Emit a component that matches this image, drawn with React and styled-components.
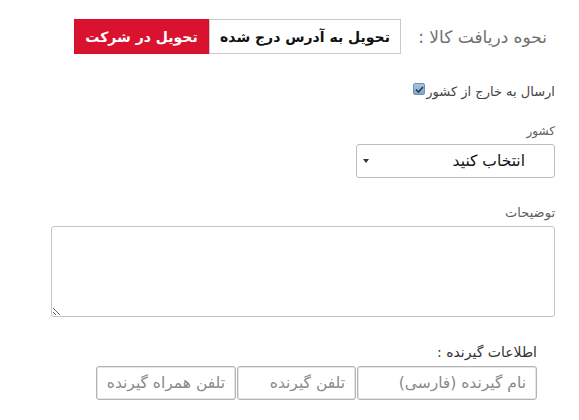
import React from "react";
import styled, { createGlobalStyle } from "styled-components";

const GlobalStyle = createGlobalStyle`
  body {
    margin: 0;
    background: #ffffff;
    font-family: "DejaVu Sans", "Noto Sans", sans-serif;
  }
`;

const Page = styled.div`
  direction: rtl;
  width: 504px;
  margin-right: 24px;
  margin-left: auto;
  padding-top: 19px;
  display: flex;
  flex-direction: column;
`;

const DeliveryRow = styled.div`
  display: flex;
  align-items: center;
  gap: 11px;
  padding-right: 8px;
`;

const Label = styled.span`
  width: 135px;
  font-size: 17px;
  color: #707070;
  white-space: nowrap;
`;

const ButtonGroup = styled.div`
  display: flex;
`;

const Choice = styled.button`
  width: ${({ $w }) => $w}px;
  height: 35px;
  padding: 0;
  font-family: inherit;
  font-size: 14px;
  font-weight: bold;
  border: 1px solid ${({ $active }) => ($active ? "#d6102c" : "#c9c9c9")};
  background: ${({ $active }) => ($active ? "#d9122f" : "#ffffff")};
  color: ${({ $active }) => ($active ? "#ffffff" : "#111")};
  cursor: pointer;
`;

const CheckRow = styled.label`
  display: flex;
  align-items: center;
  margin-top: 30px;
  font-size: 13px;
  color: #444;
  height: 14px;
`;

const Check = styled.span`
  width: 12px;
  height: 12px;
  margin-top: -4px;
  margin-right: 1px;
  border-radius: 2px;
  background: linear-gradient(#a9c6df, #7fa6c8);
  border: 1px solid #6f92b3;
  display: flex;
  align-items: center;
  justify-content: center;
  box-sizing: border-box;
`;

const Field = styled.div`
  display: flex;
  flex-direction: column;
  align-items: flex-start;
  margin-top: ${({ $top }) => $top}px;
`;

const FieldLabel = styled.div`
  font-size: ${({ $size }) => $size || 13}px;
  color: ${({ $dark }) => ($dark ? "#333" : "#606060")};
  margin-bottom: 6px;
  padding-right: ${({ $indent }) => $indent || 0}px;
`;

const Select = styled.div`
  width: 199px;
  height: 34px;
  box-sizing: border-box;
  border: 1px solid #bdbdbd;
  border-radius: 3px;
  display: flex;
  align-items: center;
  justify-content: space-between;
  padding: 0 29px 0 6px;
  font-size: 15.5px;
  color: #111;
`;

const Caret = styled.span`
  width: 0;
  height: 0;
  border-left: 3px solid transparent;
  border-right: 3px solid transparent;
  border-top: 4px solid #333;
`;

const TextArea = styled.textarea`
  width: 504px;
  height: 91px;
  box-sizing: border-box;
  border: 1px solid #c4c4c4;
  border-radius: 3px;
  resize: vertical;
  font-family: inherit;
  direction: rtl;
`;

const InputRow = styled.div`
  display: flex;
  gap: 1px;
  padding-right: 18px;
`;

const Input = styled.input`
  width: ${({ $w }) => $w}px;
  height: 34px;
  box-sizing: border-box;
  border: 1px solid #b3b3b3;
  border-radius: 3px;
  box-shadow: inset 0 0 0 1px #e6e6e6;
  padding: 0 10px;
  font-family: inherit;
  font-size: 15.5px;
  direction: rtl;
  &::placeholder {
    color: #8a8a8a;
  }
`;

export default function App() {
  return (
    <>
      <GlobalStyle />
      <Page>
        <DeliveryRow>
          <Label>نحوه دریافت کالا :</Label>
          <ButtonGroup>
            <Choice $w={192}>تحویل به آدرس درج شده</Choice>
            <Choice $w={135} $active>
              تحویل در شرکت
            </Choice>
          </ButtonGroup>
        </DeliveryRow>

        <CheckRow>
          ارسال به خارج از کشور
          <Check>
            <svg width="9" height="7" viewBox="0 0 9 7">
              <path d="M1 3.5 L3.5 6 L8 1" stroke="#1d3d5c" strokeWidth="1.6" fill="none" />
            </svg>
          </Check>
        </CheckRow>

        <Field $top={26}>
          <FieldLabel $size={12}>کشور</FieldLabel>
          <Select>
            <span>انتخاب کنید</span>
            <Caret />
          </Select>
        </Field>

        <Field $top={27}>
          <FieldLabel>توضیحات</FieldLabel>
          <TextArea />
        </Field>

        <Field $top={27}>
          <FieldLabel $indent={18} $size={14} $dark>
            اطلاعات گیرنده :
          </FieldLabel>
          <InputRow>
            <Input $w={180} placeholder="نام گیرنده (فارسی)" />
            <Input $w={119} placeholder="تلفن گیرنده" />
            <Input $w={140} placeholder="تلفن همراه گیرنده" />
          </InputRow>
        </Field>
      </Page>
    </>
  );
}
